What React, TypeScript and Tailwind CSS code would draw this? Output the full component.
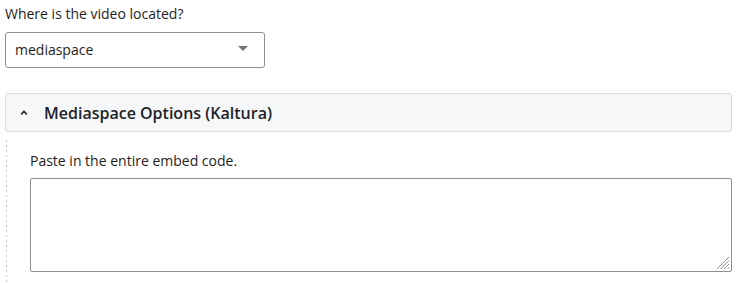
import React from 'react';

export default function App() {
  return (
    <div className="min-h-screen bg-white pl-[5px] pt-1 text-[14px] leading-5 text-[#1e1e1e] [font-family:'Open_Sans',sans-serif]">
      <div className="w-[727px]">
        <label className="block">Where is the video located?</label>
        <div className="relative mt-2 h-9 w-[260px] rounded-[3px] border border-[#8c8f94] bg-white">
          <div className="flex h-full items-center pl-[9px]">mediaspace</div>
          <svg className="absolute right-[16px] top-[13px]" width="10" height="6" viewBox="0 0 10 6">
            <path d="M0 0h10L5 5z" fill="#757575" />
          </svg>
        </div>

        <div className="mt-[25px] flex h-[39px] items-center rounded-[3px] border border-[#dcdcde] bg-[#f6f7f9]">
          <svg className="ml-[14px]" width="8" height="6" viewBox="0 0 8 6">
            <path d="M1 4.5L4 1.5L7 4.5" fill="none" stroke="#1d2327" strokeWidth="1.6" />
          </svg>
          <span className="ml-[16px] text-[16px] font-semibold text-[#1d2327]">Mediaspace Options (Kaltura)</span>
        </div>

        <div className="mt-2 flex">
          <div className="ml-px w-px bg-[repeating-linear-gradient(to_bottom,#c3c4c7_0_2px,transparent_2px_5px)]" />
          <div className="flex-1 pl-[23px] pt-[11px]">
            <label className="block">Paste in the entire embed code.</label>
            <div className="relative mt-[7px]">
              <textarea className="block h-[94px] w-full resize-none rounded-[2px] border border-[#8c8f94] bg-white" />
              <svg className="pointer-events-none absolute bottom-[2px] right-[2px]" width="14" height="14" viewBox="0 0 14 14">
                <path d="M13 1L1 13M13 4.5L4.5 13M13 8L8 13M13 11.5L11.5 13" stroke="#8c8c8c" strokeWidth="1" />
              </svg>
            </div>
            <div className="h-4" />
          </div>
        </div>
      </div>
    </div>
  );
}
